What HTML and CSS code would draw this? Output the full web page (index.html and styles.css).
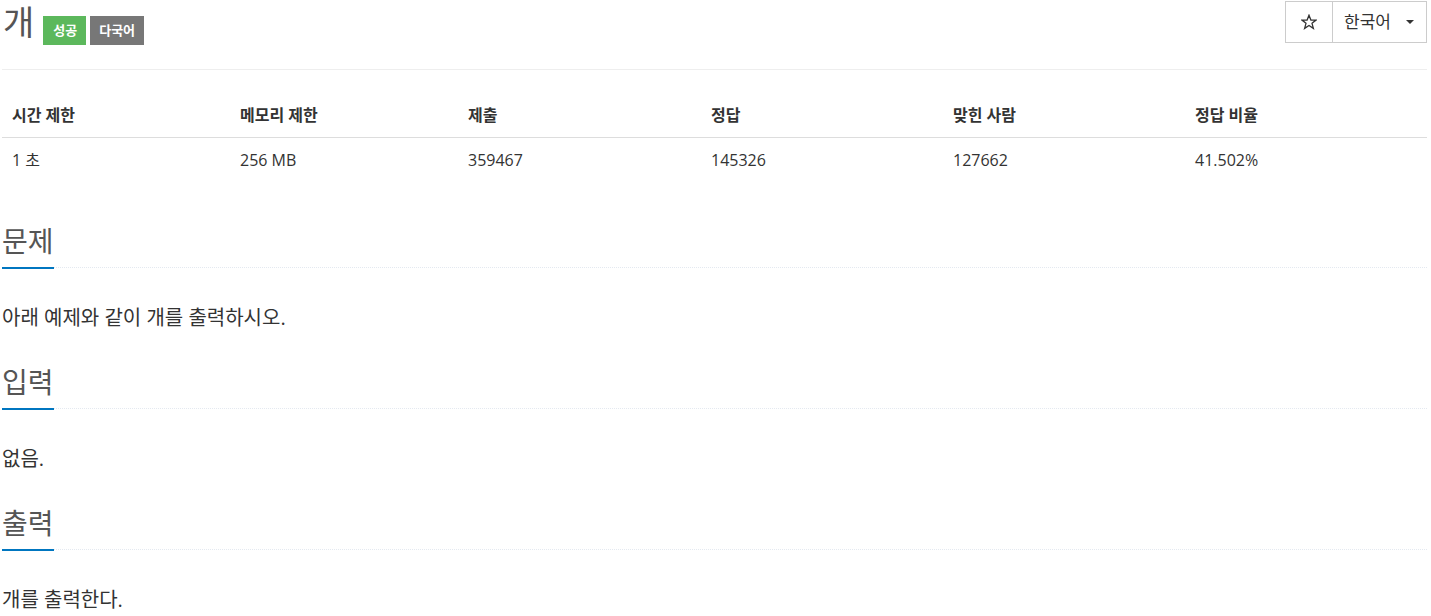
FILE: index.html
```html
<!DOCTYPE html>
<html lang="ko">
<head>
    <meta charset="utf-8" />
    <title>개</title>
    <link rel="stylesheet" href="styles.css">
</head>
<body>
    <div class="page">
        <header class="page-header">
            <h1 class="title">
                <span class="title-text">개</span>
                <span class="label label-success">성공</span>
                <span class="label label-default">다국어</span>
            </h1>
            <div class="btn-group">
                <button class="btn btn-star" type="button">
                    <svg width="16" height="16" viewBox="0 0 16 16">
                        <polygon points="8,1.2 9.9,6 15,6.1 11,9.3 12.4,14.4 8,11.5 3.6,14.4 5,9.3 1,6.1 6.1,6" fill="none" stroke="#333" stroke-width="1.3" stroke-linejoin="miter" />
                    </svg>
                </button>
                <button class="btn btn-lang" type="button">
                    한국어 <span class="caret"></span>
                </button>
            </div>
        </header>

        <table class="info">
            <thead>
                <tr>
                    <th class="c1">시간 제한</th>
                    <th class="c2">메모리 제한</th>
                    <th class="c3">제출</th>
                    <th class="c4">정답</th>
                    <th class="c5">맞힌 사람</th>
                    <th>정답 비율</th>
                </tr>
            </thead>
            <tbody>
                <tr>
                    <td>1 초 </td>
                    <td>256 MB</td>
                    <td>359467</td>
                    <td>145326</td>
                    <td>127662</td>
                    <td>41.502%</td>
                </tr>
            </tbody>
        </table>

        <section class="problem-section">
            <div class="headline">
                <h2>문제</h2>
            </div>
            <p class="problem-text">아래 예제와 같이 개를 출력하시오.</p>
        </section>

        <section class="problem-section">
            <div class="headline">
                <h2>입력</h2>
            </div>
            <p class="problem-text">없음.</p>
        </section>

        <section class="problem-section">
            <div class="headline">
                <h2>출력</h2>
            </div>
            <p class="problem-text">개를 출력한다.</p>
        </section>
    </div>
</body>
</html>
```

FILE: styles.css
```css
body, div, h1, h2, p, table, th, td {
    margin: 0;
    padding: 0;
    border: 0;
}

body {
    background: #fff;
    color: #333;
    font: 16px/20px "Open Sans", "Noto Sans CJK KR", sans-serif;
}

.page {
    padding: 0 4px 0 2px;
}

.page-header {
    display: flex;
    justify-content: space-between;
    align-items: flex-start;
    padding-bottom: 24px;
    border-bottom: 1px solid #eee;
}

    .page-header .title {
        display: flex;
        align-items: flex-start;
        font-weight: normal;
    }

        .title .title-text {
            font-size: 34px;
            line-height: 44px;
            color: #555;
            padding-left: 1px;
        }

.label {
    margin-top: 16px;
    font-size: 13px;
    line-height: 17px;
    font-weight: bold;
    color: #fff;
}

.label-success {
    background: #5cb85c;
    margin-left: 9px;
    padding: 6px 9px 6px 10px;
}

.label-default {
    background: #777;
    margin-left: 4px;
    padding: 6px 9px;
}

.btn-group {
    display: flex;
    margin-top: 1px;
}

    .btn-group .btn {
        height: 42px;
        background: #fff;
        border: 1px solid #ccc;
        color: #333;
        font: 17px/20px "Open Sans", "Noto Sans CJK KR", sans-serif;
        display: flex;
        align-items: center;
        margin: 0;
    }

    .btn-group .btn-star {
        width: 48px;
        justify-content: center;
    }

    .btn-group .btn-lang {
        width: 94px;
        padding: 0 0 0 11px;
        border-left: 0;
    }

.caret {
    display: inline-block;
    width: 0;
    height: 0;
    margin-left: 15px;
    border-top: 4px solid #333;
    border-left: 4px solid transparent;
    border-right: 4px solid transparent;
}

.info {
    width: 100%;
    margin-top: 23px;
    border-collapse: collapse;
    table-layout: fixed;
}

    .info th, .info td {
        text-align: left;
        padding: 12px 10px;
        line-height: 20px;
    }

    .info th {
        font-weight: bold;
        border-bottom: 1px solid #ddd;
    }

    .info .c1 { width: 208px; }
    .info .c2 { width: 208px; }
    .info .c3 { width: 223px; }
    .info .c4 { width: 222px; }
    .info .c5 { width: 222px; }

.problem-section {
    margin-top: 41px;
}

    .problem-section + .problem-section {
        margin-top: 31px;
    }

.headline {
    border-bottom: 1px dotted #e4e9f0;
}

    .headline h2 {
        display: inline-block;
        font-size: 28px;
        line-height: 36px;
        font-weight: normal;
        color: #555;
        padding-bottom: 8px;
        border-bottom: 2px solid #0076c0;
        margin-bottom: -2px;
        vertical-align: top;
    }

.problem-text {
    margin-top: 35px;
    font-size: 20px;
    line-height: 30px;
}
```
